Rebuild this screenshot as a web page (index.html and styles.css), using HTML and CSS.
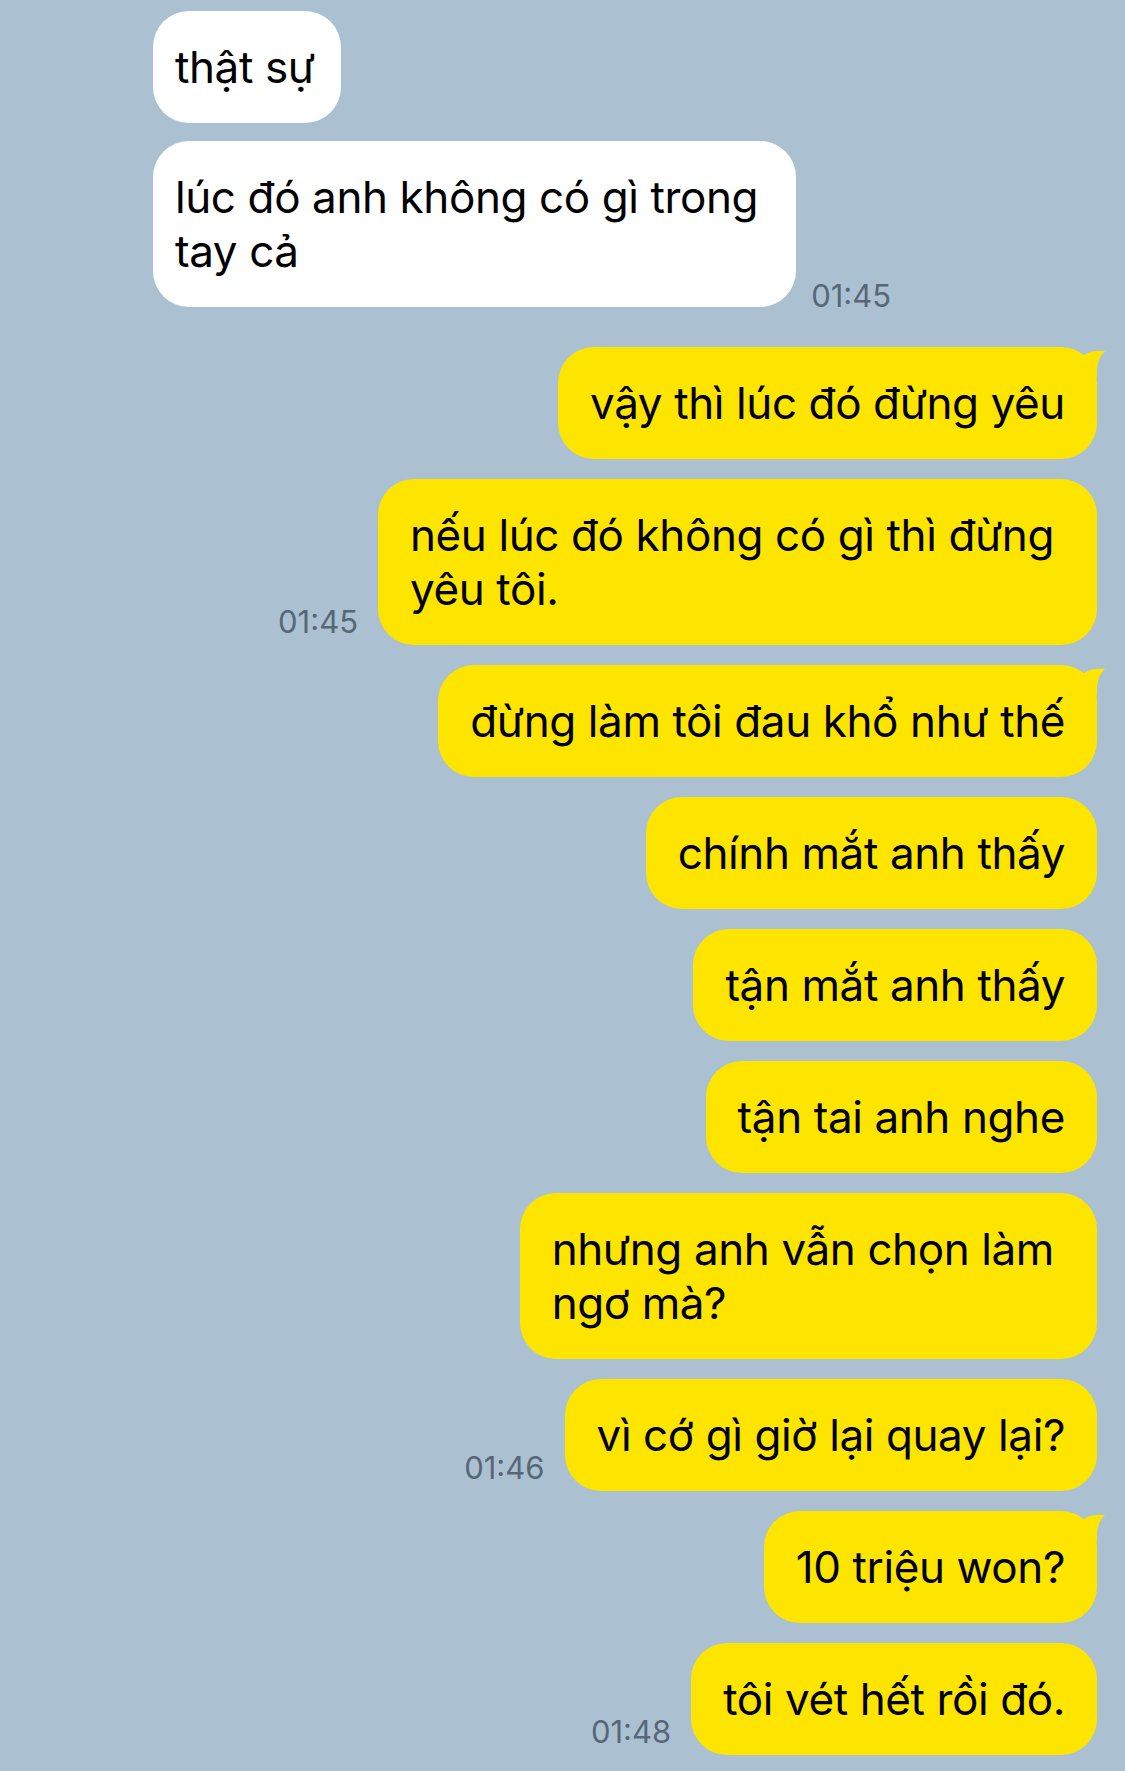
FILE: index.html
```html
<!DOCTYPE html>
<html lang="vi">
<head>
<meta charset="utf-8">
<title>Chat</title>
<link rel="stylesheet" href="styles.css">
</head>
<body>
<div class="chat">
  <div class="row in">
    <div class="bubble white">thật sự</div>
  </div>
  <div class="row in">
    <div class="bubble white multi">lúc đó anh không có gì trong<br>tay cả</div>
    <span class="time">01:45</span>
  </div>

  <div class="row out first">
    <div class="bubble yellow">vậy thì lúc đó đừng yêu<svg class="tail" viewBox="0 0 26 30" width="26" height="30"><path d="M3 8 Q11 3 24 4 Q17 10 16 22 L16 30 L0 30 L0 12 Z"/></svg></div>
  </div>
  <div class="row out">
    <span class="time">01:45</span>
    <div class="bubble yellow multi">nếu lúc đó không có gì thì đừng<br>yêu tôi.</div>
  </div>
  <div class="row out">
    <div class="bubble yellow">đừng làm tôi đau khổ như thế<svg class="tail" viewBox="0 0 26 30" width="26" height="30"><path d="M3 8 Q11 3 24 4 Q17 10 16 22 L16 30 L0 30 L0 12 Z"/></svg></div>
  </div>
  <div class="row out">
    <div class="bubble yellow">chính mắt anh thấy</div>
  </div>
  <div class="row out">
    <div class="bubble yellow">tận mắt anh thấy</div>
  </div>
  <div class="row out">
    <div class="bubble yellow">tận tai anh nghe</div>
  </div>
  <div class="row out">
    <div class="bubble yellow multi">nhưng anh vẫn chọn làm<br>ngơ mà?</div>
  </div>
  <div class="row out">
    <span class="time">01:46</span>
    <div class="bubble yellow">vì cớ gì giờ lại quay lại?</div>
  </div>
  <div class="row out">
    <div class="bubble yellow">10 triệu won?<svg class="tail" viewBox="0 0 26 30" width="26" height="30"><path d="M3 8 Q11 3 24 4 Q17 10 16 22 L16 30 L0 30 L0 12 Z"/></svg></div>
  </div>
  <div class="row out">
    <span class="time">01:48</span>
    <div class="bubble yellow">tôi vét hết rồi đó.</div>
  </div>
</div>
</body>
</html>
```

FILE: styles.css
```css
html, body {
  margin: 0;
  padding: 0;
}

body {
  background: #abc1d2;
  font-family: Inter, "Liberation Sans", Arial, sans-serif;
  color: #000;
  width: 1125px;
  height: 1771px;
  overflow: hidden;
}

.chat {
  display: flex;
  flex-direction: column;
  padding: 11px 28px 0 153px;
}

.row {
  display: flex;
  align-items: flex-end;
  margin-top: 20px;
}

.row:first-child {
  margin-top: 0;
}

.row.in + .row.in {
  margin-top: 18px;
}

.row.in {
  justify-content: flex-start;
  gap: 15px;
}

.row.out {
  justify-content: flex-end;
  gap: 20px;
}

.row.out.first {
  margin-top: 40px;
}

.bubble {
  position: relative;
  font-size: 44px;
  line-height: 54px;
  letter-spacing: -0.4px;
  padding: 29px 32px;
  border-radius: 36px;
  white-space: nowrap;
}

.bubble.white {
  background: #ffffff;
  padding: 29px 26px 29px 22px;
}

.bubble.yellow {
  background: #fee500;
}

.bubble.yellow.multi {
  padding-right: 43px;
}

.bubble.white.multi {
  padding-right: 38px;
}

.tail {
  position: absolute;
  top: 0;
  right: -10px;
  fill: #fee500;
}

.time {
  font-size: 31px;
  line-height: 30px;
  color: #576777;
}

.row.in .time {
  margin-bottom: -4px;
}

.row.out .time {
  margin-bottom: 8px;
}
```
